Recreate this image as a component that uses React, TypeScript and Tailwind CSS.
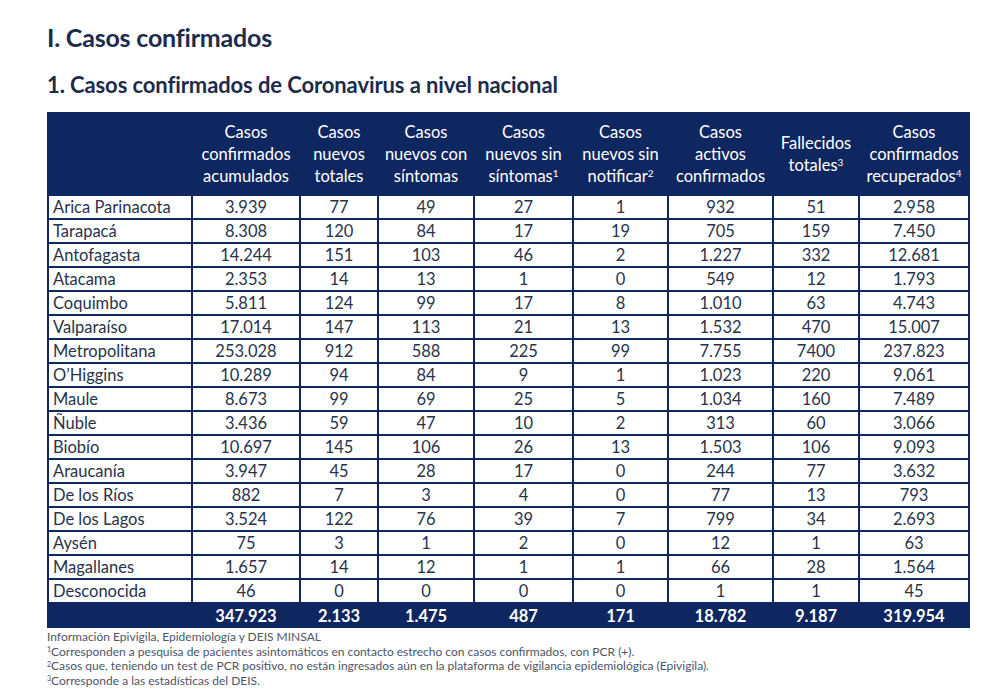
import React from "react";

const rows: [string, string, string, string, string, string, string, string, string][] = [
  ["Arica Parinacota", "3.939", "77", "49", "27", "1", "932", "51", "2.958"],
  ["Tarapacá", "8.308", "120", "84", "17", "19", "705", "159", "7.450"],
  ["Antofagasta", "14.244", "151", "103", "46", "2", "1.227", "332", "12.681"],
  ["Atacama", "2.353", "14", "13", "1", "0", "549", "12", "1.793"],
  ["Coquimbo", "5.811", "124", "99", "17", "8", "1.010", "63", "4.743"],
  ["Valparaíso", "17.014", "147", "113", "21", "13", "1.532", "470", "15.007"],
  ["Metropolitana", "253.028", "912", "588", "225", "99", "7.755", "7400", "237.823"],
  ["O’Higgins", "10.289", "94", "84", "9", "1", "1.023", "220", "9.061"],
  ["Maule", "8.673", "99", "69", "25", "5", "1.034", "160", "7.489"],
  ["Ñuble", "3.436", "59", "47", "10", "2", "313", "60", "3.066"],
  ["Biobío", "10.697", "145", "106", "26", "13", "1.503", "106", "9.093"],
  ["Araucanía", "3.947", "45", "28", "17", "0", "244", "77", "3.632"],
  ["De los Ríos", "882", "7", "3", "4", "0", "77", "13", "793"],
  ["De los Lagos", "3.524", "122", "76", "39", "7", "799", "34", "2.693"],
  ["Aysén", "75", "3", "1", "2", "0", "12", "1", "63"],
  ["Magallanes", "1.657", "14", "12", "1", "1", "66", "28", "1.564"],
  ["Desconocida", "46", "0", "0", "0", "0", "1", "1", "45"],
];

const totals = ["", "347.923", "2.133", "1.475", "487", "171", "18.782", "9.187", "319.954"];

const widths = [144, 108, 78, 96, 99, 95, 105, 86, 110];

export default function App() {
  const font = { fontFamily: "Lato, 'Open Sans', sans-serif" };
  return (
    <div className="w-[999px] h-[698px] bg-white overflow-hidden" style={font}>
      <div className="pl-[47px] pt-[22px]">
        <h1 className="text-[25px] leading-[30px] font-bold text-[#1d2b4c] tracking-[-0.2px]">I. Casos confirmados</h1>
        <h2 className="mt-[21px] text-[22px] leading-[24px] font-bold text-[#1d2b4c] tracking-[-0.1px]">
          1. Casos confirmados de Coronavirus a nivel nacional
        </h2>
        <table className="mt-[15px] border-collapse table-fixed bg-[#0f2760]" style={{ width: 921 }}>
          <colgroup>
            {widths.map((w, i) => (
              <col key={i} style={{ width: w }} />
            ))}
          </colgroup>
          <thead>
            <tr className="h-[82px] text-white text-[16.5px] leading-[22px] text-center align-middle">
              <th className="border-2 border-[#0f2760] font-normal"></th>
              <th className="border-2 border-[#0f2760] font-normal">Casos<br />confirmados<br />acumulados</th>
              <th className="border-2 border-[#0f2760] font-normal">Casos<br />nuevos<br />totales</th>
              <th className="border-2 border-[#0f2760] font-normal whitespace-nowrap">Casos<br />nuevos con<br />síntomas</th>
              <th className="border-2 border-[#0f2760] font-normal whitespace-nowrap">Casos<br />nuevos sin<br />síntomas<sup className="text-[10px]">1</sup></th>
              <th className="border-2 border-[#0f2760] font-normal whitespace-nowrap">Casos<br />nuevos sin<br />notificar<sup className="text-[10px]">2</sup></th>
              <th className="border-2 border-[#0f2760] font-normal">Casos<br />activos<br />confirmados</th>
              <th className="border-2 border-[#0f2760] font-normal">Fallecidos<br />totales<sup className="text-[10px]">3</sup></th>
              <th className="border-2 border-[#0f2760] font-normal whitespace-nowrap">Casos<br />confirmados<br />recuperados<sup className="text-[10px]">4</sup></th>
            </tr>
          </thead>
          <tbody>
            {rows.map((r) => (
              <tr key={r[0]} className="h-[24px] bg-white text-[16.5px] leading-[18px] text-[#28334a]">
                {r.map((c, i) => (
                  <td
                    key={i}
                    className={
                      "border-2 border-[#0f2760] p-0 whitespace-nowrap " + (i === 0 ? "text-left pl-[4px]" : "text-center")
                    }
                  >
                    {c}
                  </td>
                ))}
              </tr>
            ))}
            <tr className="h-[25px] text-white font-bold text-[16.5px] leading-[18px]">
              {totals.map((c, i) => (
                <td key={i} className="p-0 text-center border-0">
                  {c}
                </td>
              ))}
            </tr>
          </tbody>
        </table>
        <div className="mt-[2px] text-[12px] leading-[14.6px] text-[#4d5566]">
          <p>Información Epivigila, Epidemiología y DEIS MINSAL</p>
          <p><sup className="text-[7px]">1</sup>Corresponden a pesquisa de pacientes asintomáticos en contacto estrecho con casos confirmados, con PCR (+).</p>
          <p><sup className="text-[7px]">2</sup>Casos que, teniendo un test de PCR positivo, no están ingresados aún en la plataforma de vigilancia epidemiológica (Epivigila).</p>
          <p><sup className="text-[7px]">3</sup>Corresponde a las estadísticas del DEIS.</p>
        </div>
      </div>
    </div>
  );
}
